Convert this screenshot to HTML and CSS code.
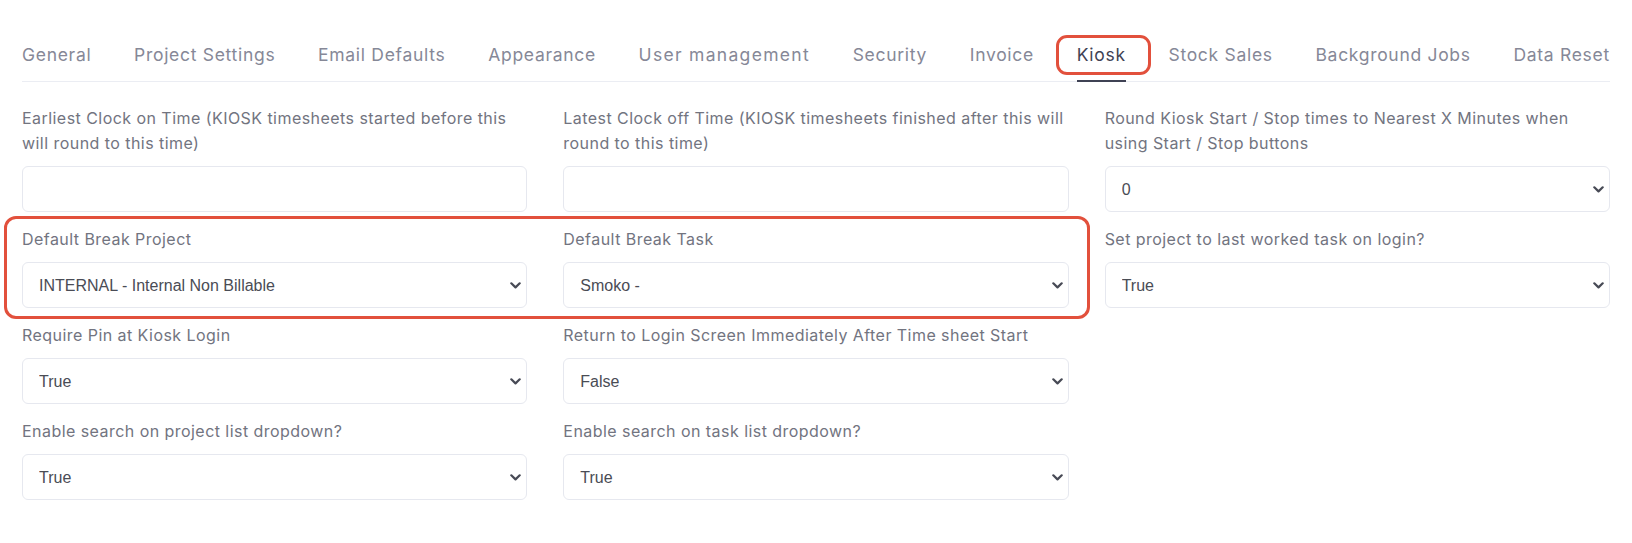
FILE: index.html
```html
<!DOCTYPE html>
<html lang="en">
<head>
<meta charset="utf-8">
<title>Settings - Kiosk</title>
<link rel="stylesheet" href="styles.css">
</head>
<body>
<div class="page">
  <nav class="tabs">
    <a class="tab">General</a>
    <a class="tab">Project Settings</a>
    <a class="tab">Email Defaults</a>
    <a class="tab">Appearance</a>
    <a class="tab wide">User management</a>
    <a class="tab">Security</a>
    <a class="tab">Invoice</a>
    <a class="tab active">Kiosk<span class="tab-mark"></span></a>
    <a class="tab">Stock Sales</a>
    <a class="tab">Background Jobs</a>
    <a class="tab">Data Reset</a>
  </nav>

  <div class="form-area">
    <div class="highlight"></div>
    <div class="form-grid">
      <div class="field">
        <label class="label">Earliest Clock on Time (KIOSK timesheets started before this will round to this time)</label>
        <input class="control" type="text">
      </div>
      <div class="field">
        <label class="label">Latest Clock off Time (KIOSK timesheets finished after this will round to this time)</label>
        <input class="control" type="text">
      </div>
      <div class="field">
        <label class="label">Round Kiosk Start / Stop times to Nearest X Minutes when using Start / Stop buttons</label>
        <div class="select-wrap">
          <select class="control select"><option>0</option></select>
          <svg class="chev" viewBox="0 0 11 7" aria-hidden="true"><path d="M1.3 1.3 L5.5 5.4 L9.7 1.3"/></svg>
        </div>
      </div>

      <div class="field">
        <label class="label">Default Break Project</label>
        <div class="select-wrap">
          <select class="control select"><option>INTERNAL - Internal Non Billable</option></select>
          <svg class="chev" viewBox="0 0 11 7" aria-hidden="true"><path d="M1.3 1.3 L5.5 5.4 L9.7 1.3"/></svg>
        </div>
      </div>
      <div class="field">
        <label class="label">Default Break Task</label>
        <div class="select-wrap">
          <select class="control select"><option>Smoko -</option></select>
          <svg class="chev" viewBox="0 0 11 7" aria-hidden="true"><path d="M1.3 1.3 L5.5 5.4 L9.7 1.3"/></svg>
        </div>
      </div>
      <div class="field">
        <label class="label">Set project to last worked task on login?</label>
        <div class="select-wrap">
          <select class="control select"><option>True</option></select>
          <svg class="chev" viewBox="0 0 11 7" aria-hidden="true"><path d="M1.3 1.3 L5.5 5.4 L9.7 1.3"/></svg>
        </div>
      </div>

      <div class="field">
        <label class="label">Require Pin at Kiosk Login</label>
        <div class="select-wrap">
          <select class="control select"><option>True</option></select>
          <svg class="chev" viewBox="0 0 11 7" aria-hidden="true"><path d="M1.3 1.3 L5.5 5.4 L9.7 1.3"/></svg>
        </div>
      </div>
      <div class="field">
        <label class="label">Return to Login Screen Immediately After Time sheet Start</label>
        <div class="select-wrap">
          <select class="control select"><option>False</option></select>
          <svg class="chev" viewBox="0 0 11 7" aria-hidden="true"><path d="M1.3 1.3 L5.5 5.4 L9.7 1.3"/></svg>
        </div>
      </div>
      <div class="field empty"></div>

      <div class="field">
        <label class="label">Enable search on project list dropdown?</label>
        <div class="select-wrap">
          <select class="control select"><option>True</option></select>
          <svg class="chev" viewBox="0 0 11 7" aria-hidden="true"><path d="M1.3 1.3 L5.5 5.4 L9.7 1.3"/></svg>
        </div>
      </div>
      <div class="field">
        <label class="label">Enable search on task list dropdown?</label>
        <div class="select-wrap">
          <select class="control select"><option>True</option></select>
          <svg class="chev" viewBox="0 0 11 7" aria-hidden="true"><path d="M1.3 1.3 L5.5 5.4 L9.7 1.3"/></svg>
        </div>
      </div>
      <div class="field empty"></div>
    </div>
  </div>
</div>
</body>
</html>
```

FILE: styles.css
```css
* { box-sizing: border-box; }

html, body {
  margin: 0;
  padding: 0;
  background: #ffffff;
}

body {
  font-family: Inter, "Open Sans", "Liberation Sans", sans-serif;
  color: #3f4254;
}

.page {
  padding: 30px 22px 0 22px;
}

.tabs {
  display: flex;
  justify-content: space-between;
  border-bottom: 1px solid #ebedf3;
}

.tab {
  position: relative;
  display: block;
  padding: 13px 0 13px;
  margin-bottom: -1px;
  border-bottom: 2px solid transparent;
  font-size: 17.5px;
  line-height: 24px;
  letter-spacing: 0.7px;
  color: #868897;
  white-space: nowrap;
}

.tab.wide {
  letter-spacing: 1.3px;
}

.tab.active {
  color: #3f4254;
  border-bottom-color: #3f4254;
}

.tab-mark {
  position: absolute;
  top: 5px;
  bottom: 5px;
  left: -21px;
  right: -25px;
  border: 3px solid #e2503c;
  border-radius: 11px;
}

.form-area {
  position: relative;
  margin-top: 24px;
}

.highlight {
  position: absolute;
  left: -18px;
  top: 110px;
  width: 1086px;
  height: 103px;
  border: 3px solid #e2503c;
  border-radius: 12px;
  pointer-events: none;
}

.form-grid {
  display: grid;
  grid-template-columns: repeat(3, 1fr);
  column-gap: 36px;
  row-gap: 15px;
}

.field {
  display: flex;
  flex-direction: column;
}

.label {
  display: block;
  font-size: 16px;
  line-height: 25px;
  letter-spacing: 0.45px;
  color: #72747f;
  margin-bottom: 10px;
}

.select-wrap {
  position: relative;
}

.control {
  display: block;
  width: 100%;
  height: 46px;
  margin: 0;
  padding: 0 30px 0 16px;
  border: 1px solid #e6e8ef;
  border-radius: 6px;
  background: #ffffff;
  font-family: "Liberation Sans", Arial, sans-serif;
  font-size: 16px;
  color: #4a4c55;
  outline: none;
}

.select {
  appearance: none;
  -webkit-appearance: none;
}

.chev {
  position: absolute;
  right: 6px;
  top: 50%;
  width: 11px;
  height: 7px;
  margin-top: -3px;
  fill: none;
  stroke: #474a55;
  stroke-width: 2.2;
  stroke-linecap: round;
  stroke-linejoin: round;
  pointer-events: none;
}
```
